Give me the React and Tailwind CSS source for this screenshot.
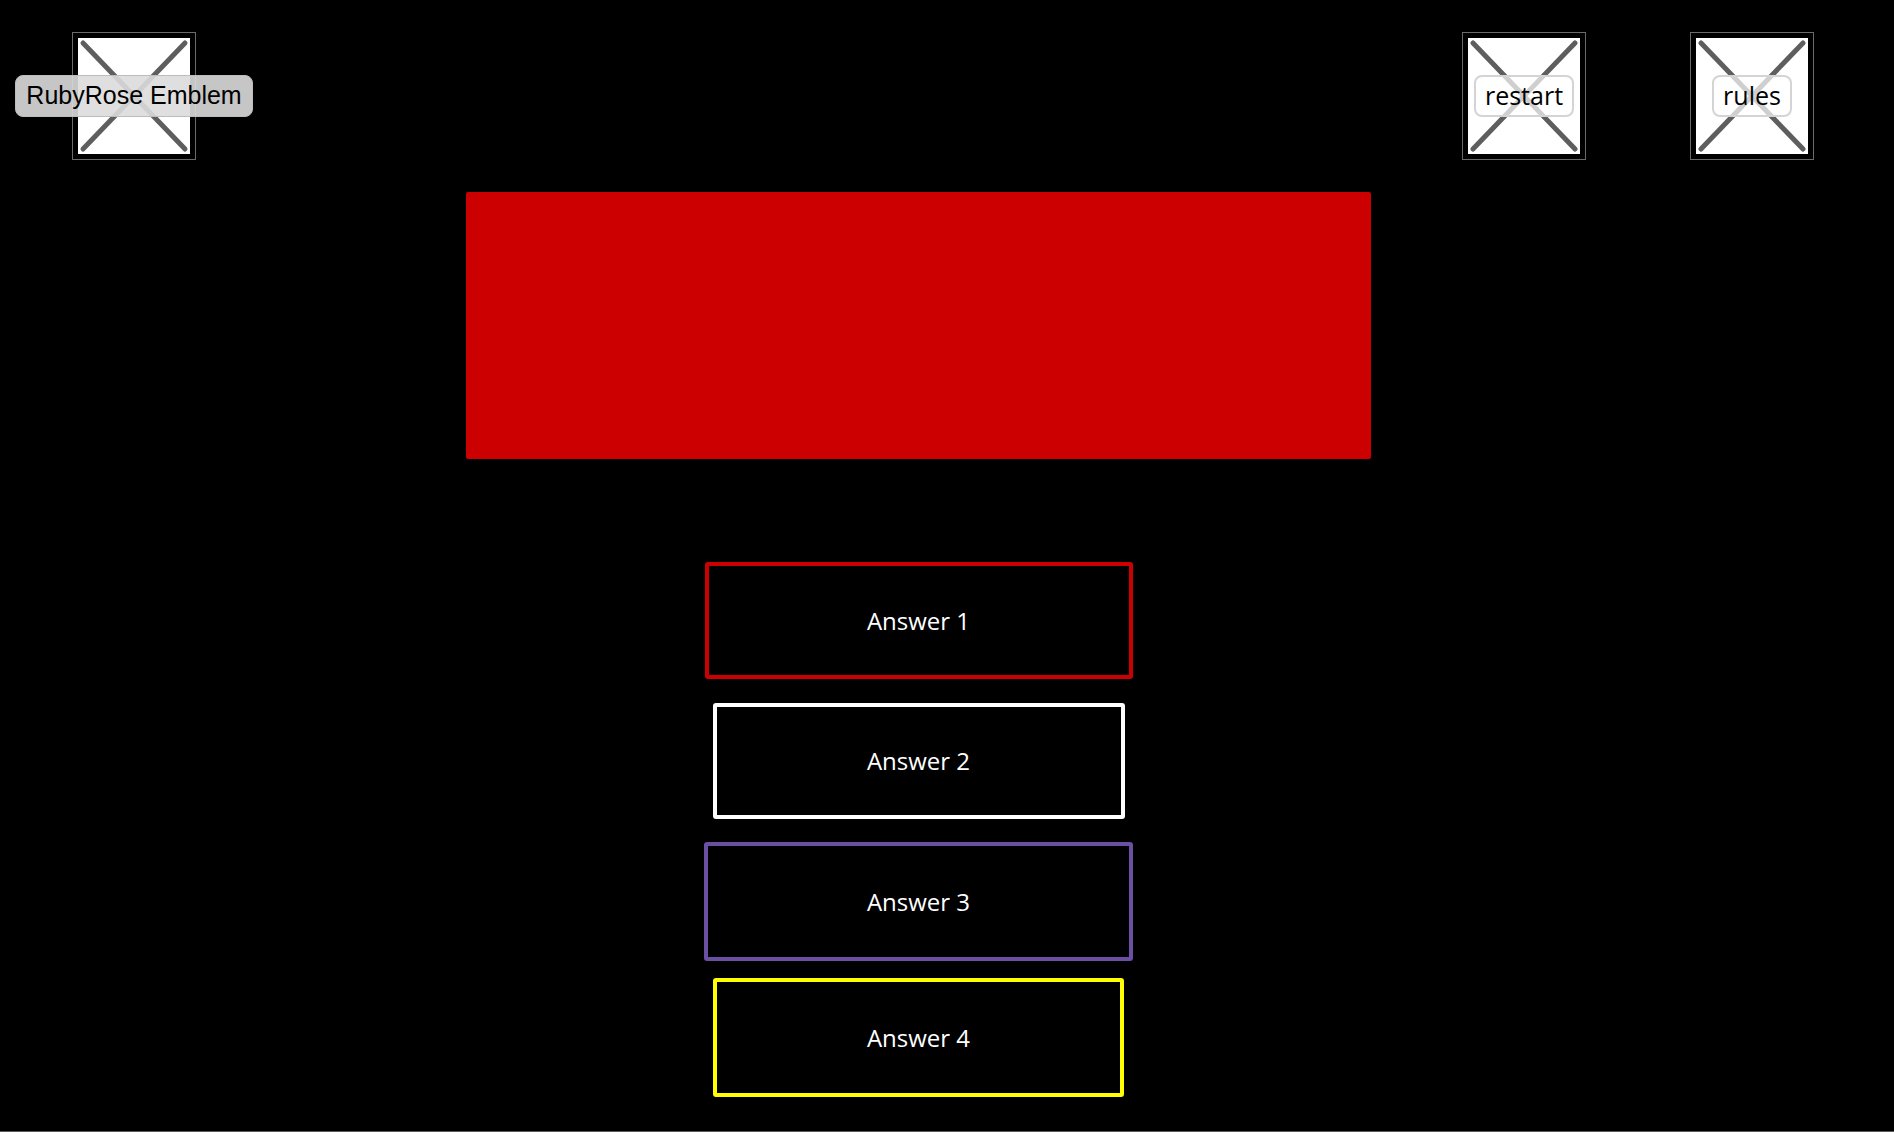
import React from 'react';

const sans = { fontFamily: '"Liberation Sans", Arial, sans-serif' };
const round = { fontFamily: '"Open Sans", "Liberation Sans", sans-serif' };

function Placeholder({ label, labelClass, labelStyle }) {
  return (
    <div className="relative w-[124px] h-[128px] border border-[#6b6b6b] bg-black p-[5px]">
      <div className="w-full h-full bg-white">
        <svg viewBox="0 0 112 116" className="w-full h-full" preserveAspectRatio="none">
          <path d="M5 5 L107 111 M107 5 L5 111" stroke="#5e5e5e" strokeWidth="5" strokeLinecap="round" fill="none" />
        </svg>
      </div>
      <div className="absolute inset-0 flex items-center justify-center">
        <span className={labelClass} style={labelStyle}>{label}</span>
      </div>
    </div>
  );
}

function Answer({ text, border, w }) {
  return (
    <div className={`flex items-center justify-center border-4 rounded-[3px] bg-black text-white text-[24px] font-medium ${border} ${w}`} style={round}>
      {text}
    </div>
  );
}

export default function App() {
  return (
    <div className="w-[1894px] h-[1132px] bg-black border-b border-[#5a5a5a] overflow-hidden">
      {/* top bar */}
      <div className="flex items-start pt-[32px] pl-[72px] pr-[80px]">
        <Placeholder
          label="RubyRose Emblem"
          labelClass="whitespace-nowrap h-[42px] px-[10px] flex items-center rounded-[8px] border border-[#bdbdbd] bg-[#dcdcdc]/90 text-black text-[25px]"
          labelStyle={sans}
        />
        <div className="flex-1" />
        <Placeholder
          label="restart"
          labelClass="whitespace-nowrap h-[42px] px-[9px] flex items-center rounded-[8px] border-2 border-[#d4d4d4] bg-white/70 text-black text-[25px]"
          labelStyle={round}
        />
        <div className="w-[104px]" />
        <Placeholder
          label="rules"
          labelClass="whitespace-nowrap h-[42px] px-[9px] flex items-center rounded-[8px] border-2 border-[#d4d4d4] bg-white/70 text-black text-[25px]"
          labelStyle={round}
        />
      </div>

      {/* question + answers */}
      <div className="ml-[466px] w-[905px] flex flex-col items-center">
        <div className="mt-[32px] w-[905px] h-[267px] bg-[#cc0000] rounded-[2px]" />
        <div className="mt-[103px] flex flex-col items-center">
          <Answer text="Answer 1" border="border-[#cc0000]" w="w-[428px] h-[117px]" />
          <div className="h-[24px]" />
          <Answer text="Answer 2" border="border-white" w="w-[412px] h-[116px]" />
          <div className="h-[23px]" />
          <Answer text="Answer 3" border="border-[#6a4fa2]" w="w-[429px] h-[119px]" />
          <div className="h-[17px]" />
          <Answer text="Answer 4" border="border-[#ffff00]" w="w-[411px] h-[119px]" />
        </div>
      </div>
    </div>
  );
}
